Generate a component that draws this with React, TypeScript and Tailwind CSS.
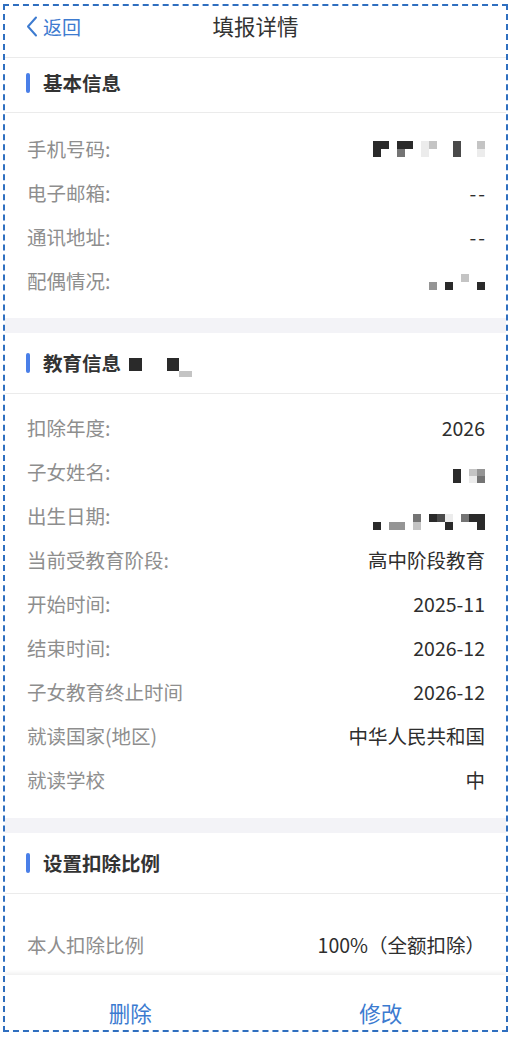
import type { ReactNode } from "react";

const FONT = { fontFamily: '"Noto Sans CJK SC", "Noto Sans", sans-serif' };

// mosaic cell shades used to blank out private values
const SHADE: Record<string, string> = {
  d: "bg-[#2a2a2a]",
  D: "bg-[#4a4a4a]",
  m: "bg-[#747474]",
  g: "bg-[#959595]",
  l: "bg-[#c4c4c4]",
  x: "bg-[#ececec]",
  ".": "bg-transparent",
};

function Mosaic({
  rows,
  cell,
  rowClasses,
  className = "",
}: {
  rows: string[];
  cell: string;
  rowClasses?: string[];
  className?: string;
}) {
  return (
    <div className={"flex flex-col " + className}>
      {rows.map((r, i) => (
        <div key={i} className={"flex " + (rowClasses ? rowClasses[i] : "h-2")}>
          {r.split("").map((c, j) => (
            <span key={j} className={cell + " h-full " + SHADE[c]} />
          ))}
        </div>
      ))}
    </div>
  );
}

function Row({ label, children }: { label: string; children: ReactNode }) {
  return (
    <div className="flex h-[44px] items-center justify-between pl-[22px] pr-[21px]">
      <span className="text-[19.5px] leading-none text-[#8e8e8e]">{label}</span>
      <div className="flex items-center text-[19.5px] leading-none text-[#2e2e2e]">{children}</div>
    </div>
  );
}

function SectionHead({ title, extra, tall = true }: { title: string; extra?: ReactNode; tall?: boolean }) {
  return (
    <div
      className={
        "flex items-center border-b border-[#ebebeb] pl-[21px] " + (tall ? "h-[61px]" : "h-[55px] pb-[5px]")
      }
    >
      <span className="h-[20px] w-[4px] rounded-full bg-[#4a7fe8]" />
      <span className="ml-[13px] text-[19.5px] font-bold leading-none text-[#333]">{title}</span>
      {extra}
    </div>
  );
}

function Gap() {
  return <div className="h-[15px] bg-[#f3f3f7]" />;
}

export default function App() {
  return (
    <div className="h-[1038px] w-[512px] overflow-hidden bg-white pt-[4px]" style={FONT}>
      <div className="ml-[3px] flex h-[1028px] w-[505px] flex-col border-2 border-dashed border-[#2f6fc0]">
        {/* top nav */}
        <div className="relative flex h-[52px] shrink-0 items-center justify-center border-b border-[#ebebeb] pb-[11px]">
          <div className="absolute left-[21px] top-[10px] flex items-center text-[#3d7bd0]">
            <svg width="12" height="21" viewBox="0 0 12 21" fill="none">
              <polyline points="10,1.5 2,10.5 10,19.5" stroke="#3d7bd0" strokeWidth="2" strokeLinecap="round" strokeLinejoin="round" />
            </svg>
            <span className="ml-[5px] text-[19px] leading-none">返回</span>
          </div>
          <span className="text-[21.5px] leading-none text-[#333]">填报详情</span>
        </div>

        <div className="flex-1 overflow-hidden">
          <SectionHead title="基本信息" tall={false} />
          <div className="pb-[15px] pt-[14px]">
            <Row label="手机号码:">
              <Mosaic cell="w-2" rows={["dd.dd.xl..D..l", "d..m..x...D..x"]} />
            </Row>
            <Row label="电子邮箱:">
              <span className="tracking-[2px]">-</span>-
            </Row>
            <Row label="通讯地址:">
              <span className="tracking-[2px]">-</span>-
            </Row>
            <Row label="配偶情况:">
              <Mosaic cell="w-2" rows={["....l..", "g.d...d"]} className="mt-[2px]" />
            </Row>
          </div>
          <Gap />

          <SectionHead
            title="教育信息"
            extra={
              <Mosaic
                cell="w-[12.5px]"
                rows={["d..d.", "....l"]}
                rowClasses={["h-[13px]", "h-[6px]"]}
                className="ml-[8px] mt-[8px]"
              />
            }
          />
          <div className="pb-[16px] pt-[12px]">
            <Row label="扣除年度:">2026</Row>
            <Row label="子女姓名:">
              <Mosaic cell="w-2" rows={["d.lg", "d.xm"]} rowClasses={["h-[7px]", "h-[7px]"]} className="mt-[8px]" />
            </Row>
            <Row label="出生日期:">
              <Mosaic cell="w-2" rows={[".....m.dDx.mdd", "d.gg.l...d...d"]} className="mt-[12px]" />
            </Row>
            <Row label="当前受教育阶段:">高中阶段教育</Row>
            <Row label="开始时间:">2025-11</Row>
            <Row label="结束时间:">2026-12</Row>
            <Row label="子女教育终止时间">2026-12</Row>
            <Row label="就读国家(地区)">中华人民共和国</Row>
            <Row label="就读学校">中</Row>
          </div>
          <Gap />

          <SectionHead title="设置扣除比例" />
          <div className="pt-[29px]">
            <Row label="本人扣除比例">100%（全额扣除）</Row>
          </div>
        </div>

        {/* action bar */}
        <div className="flex h-[55px] shrink-0 bg-white pt-[20px] shadow-[0_-2px_4px_rgba(0,0,0,0.07)]">
          <button className="flex-1 text-[21.5px] leading-none text-[#3b7bd0]">删除</button>
          <button className="flex-1 text-[21.5px] leading-none text-[#3b7bd0]">修改</button>
        </div>
      </div>
    </div>
  );
}
